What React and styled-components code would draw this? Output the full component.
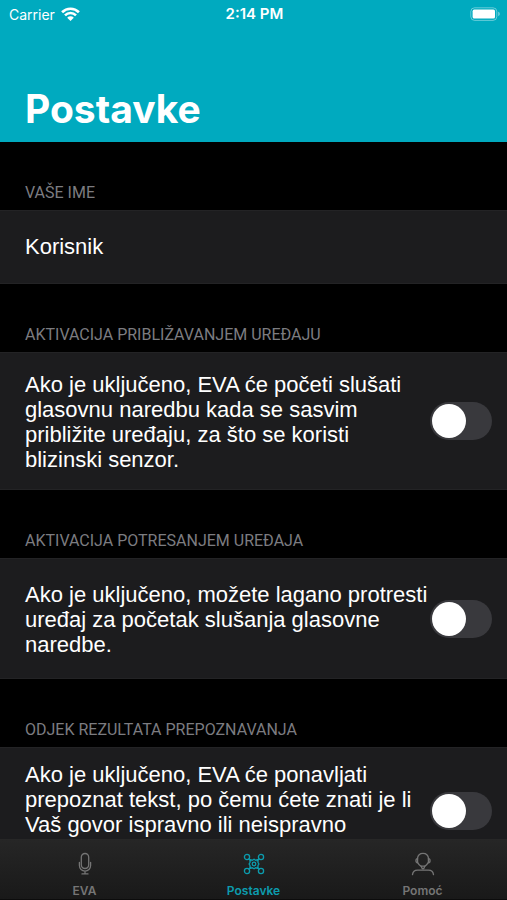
import React, { useState } from 'react';
import styled, { createGlobalStyle, css } from 'styled-components';

const GlobalStyle = createGlobalStyle`
  :root {
    --teal: #00aabf;
    --black: #000;
    --row: #1c1c1e;
    --row-border: #232325;
    --track: #39393d;
    --muted: #7c7c80;
    --tab: #757575;
    --tab-active: #0c9cae;
    --white: #fff;
    --font-ui: Inter, 'Liberation Sans', sans-serif;
    --font-label: Roboto, 'Liberation Sans', sans-serif;
    --font-text: 'Liberation Sans', Arial, sans-serif;
  }

  * {
    box-sizing: border-box;
  }

  body {
    margin: 0;
    background-color: var(--black);
    color: var(--white);
    font-family: var(--font-ui);
  }
`;

const StyledScreen = styled.div`
  display: flex;
  flex-direction: column;
  height: 100vh;
`;

const StyledHeader = styled.header`
  flex-shrink: 0;
  padding-bottom: 6px;
  background-color: var(--teal);

  h1 {
    margin: 54px 25px 0;
    font-size: 39px;
    font-weight: 700;
    line-height: 54px;
  }
`;

const StyledStatusBar = styled.div`
  display: grid;
  grid-template-columns: 1fr auto 1fr;
  align-items: center;
  height: 28px;
  padding: 0 7px 0 9px;
  font-size: 14px;

  .carrier {
    display: flex;
    align-items: center;
    gap: 6px;
  }

  time {
    font-size: 15px;
    font-weight: 600;
    line-height: 16px;
  }

  .battery {
    justify-self: end;
  }

  svg {
    display: block;
  }
`;

const StyledMain = styled.main`
  flex: 1;
  min-height: 0;
  overflow-y: auto;
  scrollbar-width: none;
`;

const StyledSectionTitle = styled.h2`
  height: 68px;
  margin: 0;
  padding: 41px 25px 0;
  color: var(--muted);
  font-family: var(--font-label);
  font-size: 16px;
  font-weight: 400;
  line-height: 20px;
  text-transform: uppercase;

  label {
    display: block;
  }
`;

const rowSurface = css`
  border: solid var(--row-border);
  border-width: 1px 0;
  background-color: var(--row);
  font-family: var(--font-text);
  font-size: 22px;
  line-height: 25px;
`;

const StyledNameInput = styled.input`
  ${rowSurface};
  display: block;
  width: 100%;
  height: 74px;
  padding: 0 25px;
  border-radius: 0;
  outline: 0;
  color: var(--white);
`;

const StyledRow = styled.div`
  ${rowSurface};
  display: flex;
  align-items: center;
  padding: ${({ $pad }) => $pad}px 15px ${({ $pad }) => $pad}px 25px;

  label {
    flex: 1;
    min-height: ${({ $lines }) => $lines * 25 + 2}px;
    padding-top: 2px;
  }
`;

const StyledSwitch = styled.input`
  appearance: none;
  display: flex;
  flex-shrink: 0;
  align-items: center;
  width: 62px;
  height: 38px;
  margin: 0;
  padding: 2px;
  border-radius: 19px;
  background-color: var(--track);
  cursor: pointer;

  &:before {
    content: '';
    width: 34px;
    height: 34px;
    border-radius: 50%;
    background-color: var(--white);
  }

  &:checked {
    justify-content: flex-end;
    background-color: var(--teal);
  }
`;

const StyledTabBar = styled.nav`
  display: grid;
  flex-shrink: 0;
  grid-template-columns: repeat(3, 1fr);
  height: 61px;
  border-top: 1px solid #272727;
  border-bottom: 1px solid #0c0c0c;
  background: linear-gradient(#262626, #191919);
`;

const StyledTab = styled.button`
  display: flex;
  flex-direction: column;
  align-items: center;
  gap: 7px;
  padding: 12px 0 0;
  border: 0;
  background: none;
  color: ${({ $active }) => ($active ? 'var(--tab-active)' : 'var(--tab)')};
  font-family: var(--font-ui);
  font-size: 12px;
  font-weight: 600;
  line-height: 16px;
  cursor: pointer;

  svg {
    display: block;
    fill: none;
    stroke: currentColor;
    stroke-width: 1.3;
    stroke-linecap: round;
  }
`;

const IconWifi = () => (
  <svg width="19" height="14" viewBox="0 0 19 14" fill="none" stroke="#fff" aria-hidden="true">
    <path d="M1.1 5.2a12 12 0 0 1 16.8 0" strokeWidth="2.7" />
    <path d="M4 8.3a7.8 7.8 0 0 1 11 0" strokeWidth="2.6" />
    <path d="M6.2 10.7a4.6 4.6 0 0 1 6.6 0l-3.3 3.3z" fill="#fff" stroke="none" />
  </svg>
);

const IconBattery = () => (
  <svg width="30" height="14" viewBox="0 0 30 14" fill="none" aria-hidden="true">
    <rect x="0.8" y="0.8" width="26" height="12.6" rx="3.8" stroke="#fff" strokeOpacity="0.4" />
    <rect x="2.6" y="2.6" width="22.4" height="9" rx="1.6" fill="#fff" />
    <path d="M28.2 4.8v4.4c1-.3 1.6-1.2 1.6-2.2s-.6-1.9-1.6-2.2z" fill="#fff" fillOpacity="0.45" />
  </svg>
);

const IconMic = () => (
  <svg width="24" height="24" viewBox="0 0 24 24" aria-hidden="true">
    <rect x="8.3" y="1.5" width="7.4" height="15" rx="3.7" />
    <path d="M6.4 10.5v3a5.6 5.6 0 0 0 11.2 0v-3M12 19.2v2.6M9 21.9h6" />
  </svg>
);

const IconNodes = () => (
  <svg width="24" height="24" viewBox="0 0 24 24" aria-hidden="true">
    <circle cx="5" cy="5" r="2.6" />
    <circle cx="19" cy="5" r="2.6" />
    <circle cx="5" cy="19" r="2.6" />
    <circle cx="19" cy="19" r="2.6" />
    <path d="M6.9 6.9l2 2M17.1 6.9l-2 2M6.9 17.1l2-2M17.1 17.1l-2-2" />
    <path d="M8 7.6l2.3.6L12 7.2l1.700 1 2.300-.6v2.900l.9 1.500-.9 1.500v2.900l-2.300-.6-1.700 1-1.700-1-2.300.6v-2.900L7.100 12l.9-1.500z" />
    <circle cx="12" cy="12" r="1.8" />
  </svg>
);

const IconSupport = () => (
  <svg width="24" height="24" viewBox="0 0 24 24" aria-hidden="true">
    <path d="M6.4 6.6C6.8 3.4 9 1.3 12 1.3s5.2 2.1 5.6 5.3" />
    <path d="M6.6 6.6v4.2c-2.2 0-2.2-4.2 0-4.2zM17.4 6.6v4.2c2.2 0 2.2-4.2 0-4.2z" />
    <path d="M6.8 10.8c.6 1.5 1.8 2.7 3.4 3.5M17 10.8c-.6 1.5-1.7 2.7-3.3 3.5" />
    <path d="M10.3 14.2h3.4l-.6 1.8-1.1.9-1.1-.9z" />
    <path d="M1.5 22.7c.4-3.2 2.2-4.5 5-4.5h11c2.8 0 4.6 1.3 5 4.5" />
  </svg>
);

const options = [
  {
    id: 'proximity',
    title: 'Aktivacija približavanjem uređaju',
    text:
      'Ako je uključeno, EVA će početi slušati glasovnu naredbu kada se sasvim približite uređaju, za što se koristi blizinski senzor.',
    lines: 4,
    pad: 17,
  },
  {
    id: 'shake',
    title: 'Aktivacija potresanjem uređaja',
    text:
      'Ako je uključeno, možete lagano protresti uređaj za početak slušanja glasovne naredbe.',
    lines: 3,
    pad: 21,
  },
  {
    id: 'echo',
    title: 'Odjek rezultata prepoznavanja',
    text:
      'Ako je uključeno, EVA će ponavljati prepoznat tekst, po čemu ćete znati je li Vaš govor ispravno ili neispravno',
    lines: 4,
    pad: 12,
  },
];

const tabs = [
  { name: 'EVA', Icon: IconMic },
  { name: 'Postavke', Icon: IconNodes },
  { name: 'Pomoć', Icon: IconSupport },
];

const App = () => {
  const [name, setName] = useState('Korisnik');
  const [activeTab, setActiveTab] = useState('Postavke');

  return (
    <StyledScreen>
      <GlobalStyle />

      <StyledHeader>
        <StyledStatusBar>
          <span className="carrier">
            Carrier <IconWifi />
          </span>
          <time>2:14 PM</time>
          <span className="battery">
            <IconBattery />
          </span>
        </StyledStatusBar>
        <h1>Postavke</h1>
      </StyledHeader>

      <StyledMain>
        <section>
          <StyledSectionTitle>
            <label htmlFor="name">Vaše ime</label>
          </StyledSectionTitle>
          <StyledNameInput
            id="name"
            type="text"
            value={name}
            onChange={e => setName(e.target.value)}
          />
        </section>

        {options.map(({ id, title, text, lines, pad }) => (
          <section key={id}>
            <StyledSectionTitle>{title}</StyledSectionTitle>
            <StyledRow $lines={lines} $pad={pad}>
              <label htmlFor={id}>{text}</label>
              <StyledSwitch id={id} type="checkbox" role="switch" />
            </StyledRow>
          </section>
        ))}
      </StyledMain>

      <StyledTabBar>
        {tabs.map(({ name: tab, Icon }) => (
          <StyledTab
            key={tab}
            type="button"
            $active={tab === activeTab}
            onClick={() => setActiveTab(tab)}>
            <Icon />
            {tab}
          </StyledTab>
        ))}
      </StyledTabBar>
    </StyledScreen>
  );
};

export default App;
